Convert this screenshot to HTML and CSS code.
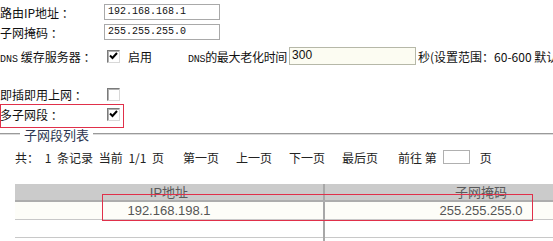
FILE: index.html
```html
<!DOCTYPE html>
<html lang="zh-CN">
<head>
  <meta charset="UTF-8">
  <title>LAN 设置</title>
  <link rel="stylesheet" href="styles.css">
</head>
<body>
<div class="page">

  <div class="form">
    <div class="row r1">
      <span class="lbl">路由IP地址 ：</span>
      <span class="field mono">192.168.168.1</span>
    </div>
    <div class="row r2">
      <span class="lbl">子网掩码 ：</span>
      <span class="field mono">255.255.255.0</span>
    </div>
    <div class="row r3">
      <span class="lbl"><span class="mono">DNS</span> 缓存服务器 ：</span>
      <span class="check on"><svg width="9" height="8" viewBox="0 0 9 8"><path d="M1 3.5 L3.5 6 L8 1" fill="none" stroke="#000" stroke-width="2"/></svg></span>
      <span class="enable">启用</span>
      <span class="age"><span class="mono">DNS</span>的最大老化时间</span>
      <span class="field age-input">300</span>
      <span class="hint">秒(设置范围：60-600 默认</span>
    </div>
    <div class="row r4"></div>
    <div class="row r5">
      <span class="lbl">即插即用上网 ：</span>
      <span class="check"></span>
    </div>
    <div class="row r6">
      <span class="lbl">多子网段 ：</span>
      <span class="check on"><svg width="9" height="8" viewBox="0 0 9 8"><path d="M1 3.5 L3.5 6 L8 1" fill="none" stroke="#000" stroke-width="2"/></svg></span>
    </div>
  </div>

  <div class="legend">
    <span class="line short"></span>
    <span class="legend-text">子网段列表</span>
    <span class="line"></span>
  </div>

  <div class="pager">
    <span class="total">共： 1 条记录 当前 1/1 页</span>
    <span class="nav">第一页</span>
    <span class="nav">上一页</span>
    <span class="nav">下一页</span>
    <span class="nav last">最后页</span>
    <span class="goto">前往 第 <span class="page-box"></span> 页</span>
  </div>

  <table class="list">
    <tr class="head"><th class="c1">IP地址</th><th>子网掩码</th></tr>
    <tr class="odd"><td class="c1">192.168.198.1</td><td>255.255.255.0</td></tr>
    <tr><td class="c1"></td><td></td></tr>
    <tr><td class="c1"></td><td></td></tr>
  </table>

  <div class="mark mark-row"></div>
  <div class="mark mark-table"></div>
</div>
</body>
</html>
```

FILE: styles.css
```css
body {
  margin: 0;
  font-family: "Noto Sans CJK SC", "Liberation Sans", sans-serif;
  font-size: 12px;
  color: #111;
  background: #fff;
  overflow: hidden;
}

.page {
  position: relative;
  width: 553px;
  height: 241px;
  overflow: hidden;
}

.form {
  padding-top: 2px;
}

.row {
  display: flex;
  align-items: center;
  height: 20px;
  white-space: nowrap;
}
.row > span {
  flex: none;
}
.r3 { height: 28px; }
.r4 { height: 15px; }
.r5 { height: 19px; }
.r6 { height: 20px; }

.lbl {
  width: 104px;
}

.mono {
  font-family: "Liberation Mono", monospace;
  font-size: 10px;
}

.field {
  box-sizing: border-box;
  width: 116px;
  height: 16px;
  border: 1px solid #a9a9a9;
  background: #fff;
  padding: 0 3px;
  line-height: 14px;
}

.check {
  box-sizing: border-box;
  width: 13px;
  height: 13px;
  margin-left: 3px;
  border-top: 1px solid #7a7a7a;
  border-left: 1px solid #7a7a7a;
  border-right: 1px solid #d8d8d8;
  border-bottom: 1px solid #d8d8d8;
  box-shadow: inset 1px 1px 0 #b0b0b0;
  background: #fff;
  display: flex;
  align-items: center;
  justify-content: center;
}

.enable {
  margin-left: 8px;
}

.age {
  margin-left: 36px;
  margin-right: 2px;
  letter-spacing: -0.3px;
}

.age-input {
  width: 127px;
  height: 18px;
  font-family: "Liberation Sans", sans-serif;
  font-size: 12px;
  border-color: #b6b8a8;
  background: #fcfcf2;
  padding: 0 2px;
}

.hint {
  margin-left: 2px;
}

.legend {
  display: flex;
  align-items: center;
  height: 20px;
}
.line {
  flex: 1;
  height: 0;
  border-top: 1px solid #9a9a9a;
  border-bottom: 1px solid #dcdcdc;
}
.line.short {
  flex: none;
  width: 20px;
}
.legend-text {
  padding: 0 4px;
  font-size: 13px;
  color: #2c3550;
}

.pager {
  display: flex;
  align-items: center;
  height: 20px;
  margin-top: 3px;
  padding-left: 15px;
  color: #222;
  white-space: nowrap;
}
.pager > span {
  flex: none;
}
.total {
  width: 168px;
  word-spacing: 3px;
}
.nav {
  width: 53px;
}
.nav.last {
  width: 56px;
}
.goto {
  display: flex;
  align-items: center;
}
.page-box {
  display: inline-block;
  width: 25px;
  height: 12px;
  margin: 0 10px 0 6px;
  border: 1px solid #b0b0b0;
}

.list {
  margin-top: 17px;
  margin-left: 15px;
  width: 622px;
  border-collapse: collapse;
  table-layout: fixed;
  font-family: "Liberation Sans", sans-serif;
  font-size: 13px;
  color: #555;
}
.list th,
.list td {
  height: 17px;
  padding: 0;
  line-height: 15px;
  text-align: center;
  border-bottom: 1px solid #c8c8c8;
  font-weight: normal;
}
.list .c1 {
  width: 308px;
  border-right: 2px solid #a8a8a8;
}
.list .head th {
  height: 16px;
  background: #cbcbcb;
  border-bottom: 2px solid #adadad;
  color: #5a5a5a;
}
.list .odd td {
  background: #fdfdf8;
}

.mark {
  position: absolute;
  border: 1px solid #e0304a;
}
.mark-row {
  left: 0;
  top: 104px;
  width: 122px;
  height: 22px;
}
.mark-table {
  left: 102px;
  top: 194px;
  width: 429px;
  height: 25px;
}
```
